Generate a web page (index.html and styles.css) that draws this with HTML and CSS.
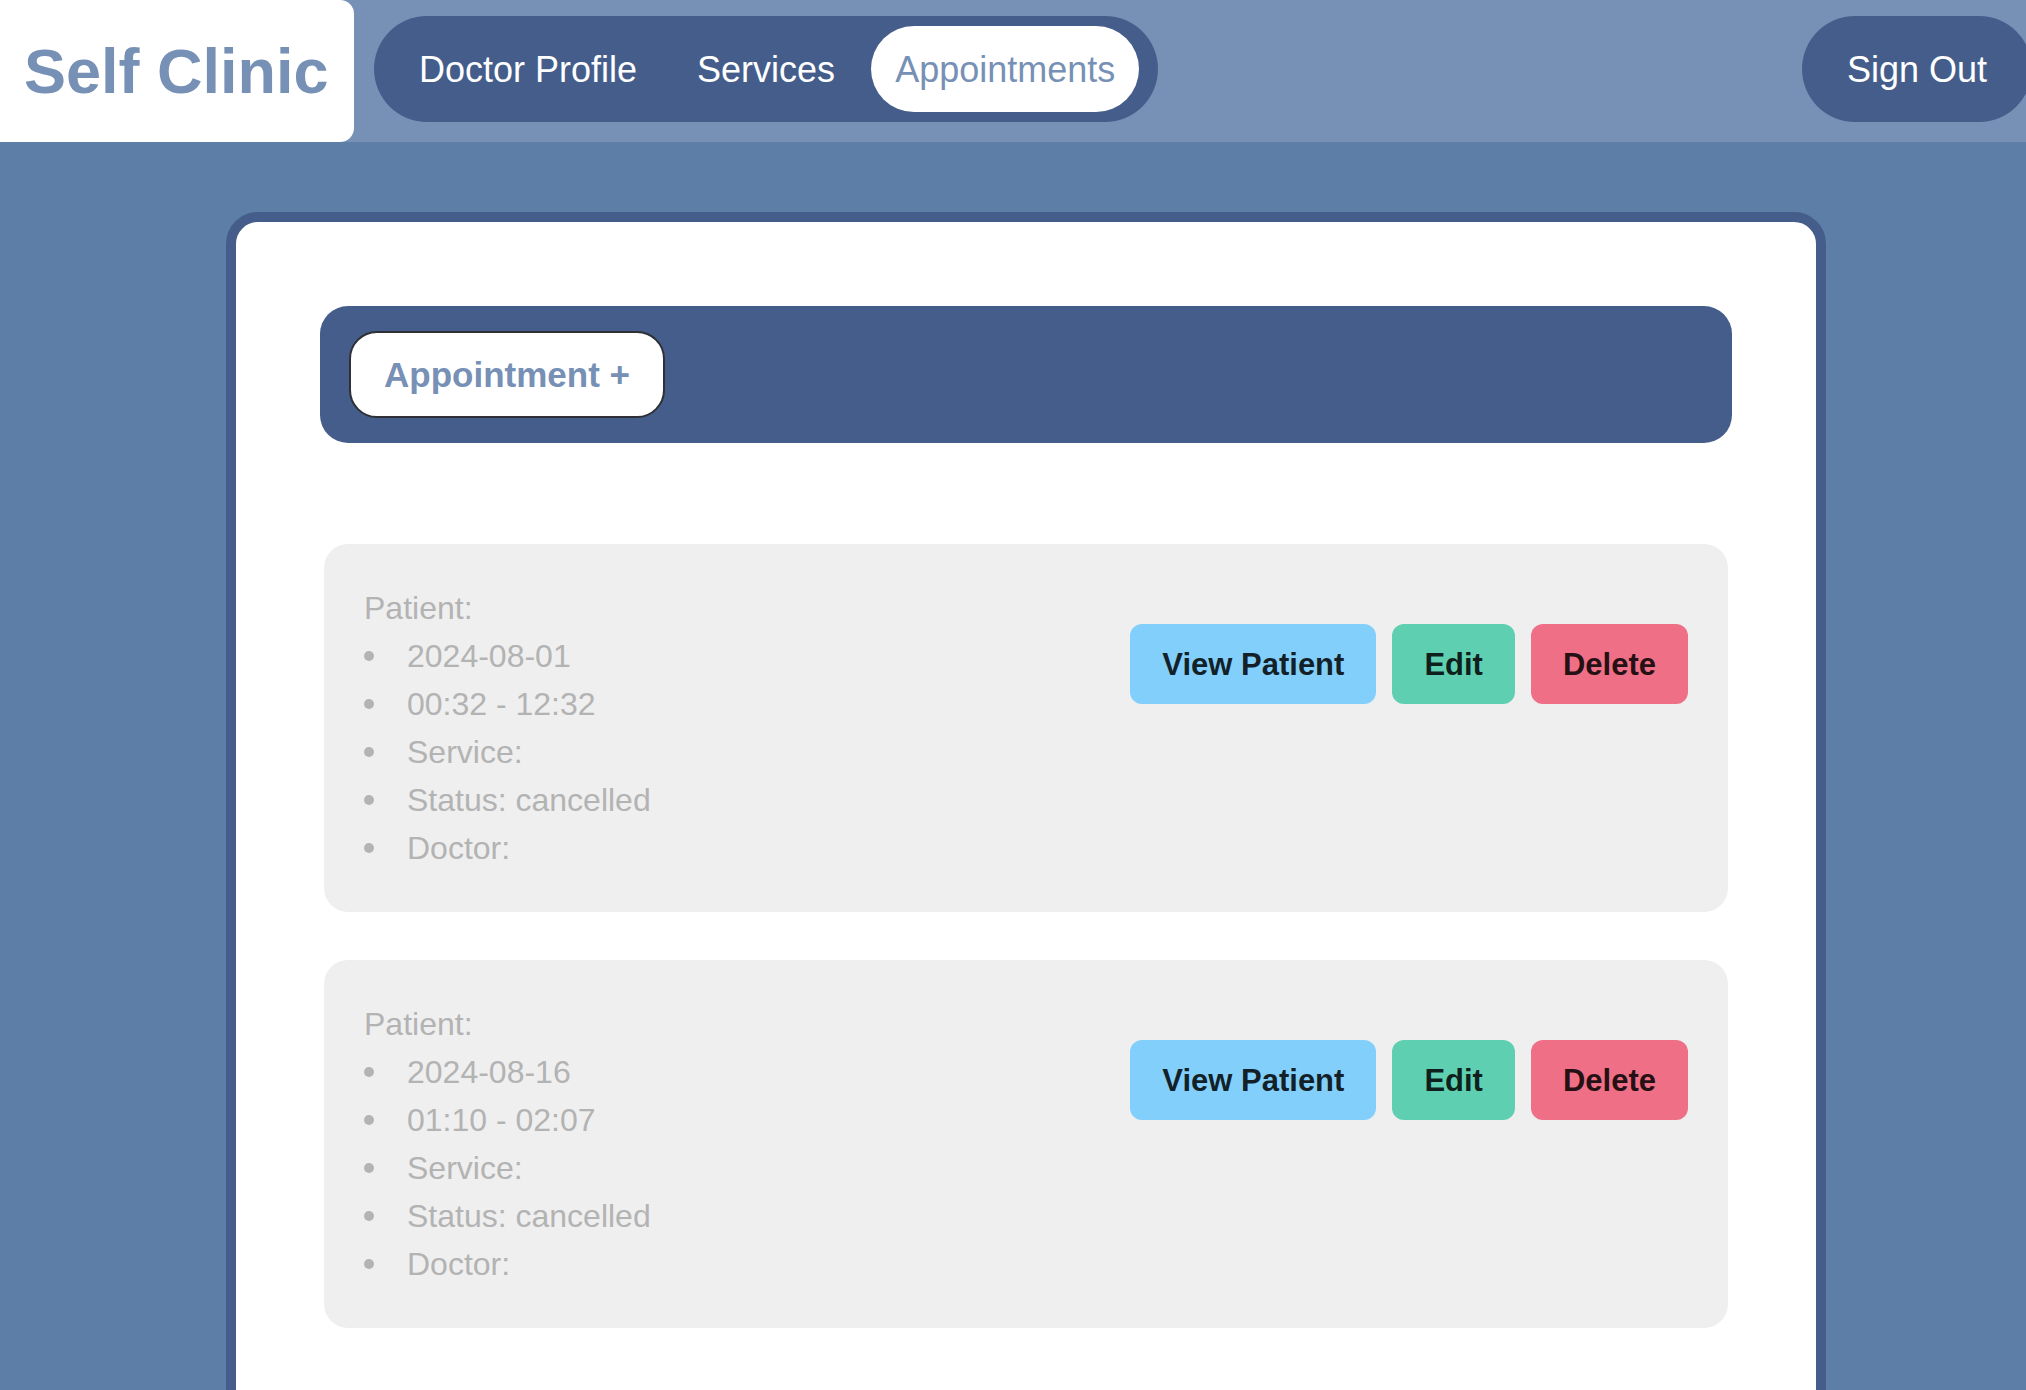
FILE: index.html
```html
<!DOCTYPE html>
<html lang="en">
<head>
<meta charset="utf-8">
<title>Self Clinic - Appointments</title>
<link rel="stylesheet" href="styles.css">
</head>
<body>
<header class="topbar">
  <div class="logo">Self Clinic</div>
  <nav class="nav">
    <a class="nav-link" href="#">Doctor Profile</a>
    <a class="nav-link" href="#">Services</a>
    <a class="nav-link active" href="#">Appointments</a>
  </nav>
  <a class="signout" href="#">Sign Out</a>
</header>
<main class="main">
  <section class="panel">
    <div class="toolbar">
      <button class="add-btn">Appointment +</button>
    </div>
    <div class="list">
      <article class="appt">
        <div class="info">
          <p class="patient">Patient:</p>
          <ul class="details">
            <li>2024-08-01</li>
            <li>00:32 - 12:32</li>
            <li>Service:</li>
            <li>Status: cancelled</li>
            <li>Doctor:</li>
          </ul>
        </div>
        <div class="actions">
          <button class="btn btn-view">View Patient</button>
          <button class="btn btn-edit">Edit</button>
          <button class="btn btn-delete">Delete</button>
        </div>
      </article>
      <article class="appt">
        <div class="info">
          <p class="patient">Patient:</p>
          <ul class="details">
            <li>2024-08-16</li>
            <li>01:10 - 02:07</li>
            <li>Service:</li>
            <li>Status: cancelled</li>
            <li>Doctor:</li>
          </ul>
        </div>
        <div class="actions">
          <button class="btn btn-view">View Patient</button>
          <button class="btn btn-edit">Edit</button>
          <button class="btn btn-delete">Delete</button>
        </div>
      </article>
    </div>
  </section>
</main>
</body>
</html>
```
FILE: styles.css
```css
* {
  box-sizing: border-box;
}

html, body {
  margin: 0;
  padding: 0;
}

body {
  background: #5d7ea7;
  font-family: "Liberation Sans", Arial, Helvetica, sans-serif;
}

.topbar {
  display: flex;
  align-items: flex-start;
  height: 142px;
  background: #7790b5;
  overflow: hidden;
}

.logo {
  height: 142px;
  width: 354px;
  padding-left: 24px;
  background: #ffffff;
  border-radius: 0 14px 14px 0;
  color: #7790b5;
  font-size: 63px;
  font-weight: bold;
  line-height: 142px;
  white-space: nowrap;
}

.nav {
  display: flex;
  gap: 12px;
  margin: 16px 0 0 20px;
  padding: 10px 19px 10px 21px;
  height: 106px;
  background: #445d8b;
  border-radius: 53px;
}

.nav-link {
  display: block;
  padding: 23px 24px 21px;
  font-size: 36px;
  line-height: 42px;
  color: #ffffff;
  text-decoration: none;
  border-radius: 43px;
  white-space: nowrap;
}

.nav-link.active {
  background: #ffffff;
  color: #7790b5;
}

.signout {
  display: block;
  margin: 16px -6px 0 auto;
  height: 106px;
  padding: 0 45px;
  line-height: 108px;
  font-size: 36px;
  color: #ffffff;
  text-decoration: none;
  background: #445d8b;
  border-radius: 53px;
  white-space: nowrap;
}

.main {
  padding: 70px 0 0 226px;
}

.panel {
  width: 1600px;
  background: #ffffff;
  border: 10px solid #445d8b;
  border-radius: 32px;
  padding: 84px 84px 200px;
}

.toolbar {
  background: #445d8b;
  border-radius: 28px;
  padding: 25px 29px;
}

.add-btn {
  display: block;
  font-family: inherit;
  font-size: 35px;
  font-weight: bold;
  line-height: 40px;
  color: #7790b5;
  background: #ffffff;
  border: 2px solid #2f3035;
  border-radius: 28px;
  padding: 22px 33px 21px;
  cursor: pointer;
}

.list {
  display: flex;
  flex-direction: column;
  gap: 48px;
  margin-top: 101px;
  padding: 0 4px;
}

.appt {
  display: flex;
  justify-content: space-between;
  align-items: flex-start;
  background: #efefef;
  border-radius: 24px;
  padding: 40px;
  color: #b3b3b3;
  font-size: 32px;
  line-height: 48px;
}

.patient {
  margin: 0;
}

.details {
  margin: 0;
  padding: 0;
  list-style: none;
}

.details li {
  display: flex;
  align-items: center;
}

.details li::before {
  content: "";
  flex: none;
  width: 10px;
  height: 10px;
  margin-right: 33px;
  border-radius: 50%;
  background: #b3b3b3;
}

.actions {
  display: flex;
  gap: 16px;
  margin-top: 40px;
}

.btn {
  font-family: inherit;
  font-size: 31px;
  font-weight: bold;
  line-height: 37px;
  color: rgba(0, 0, 0, 0.86);
  border: none;
  border-radius: 12px;
  padding: 22px 32px 21px;
  cursor: pointer;
}

.btn-view {
  background: #81cffa;
}

.btn-edit {
  background: #5ecfb1;
}

.btn-delete {
  background: #ef6f86;
}
```
